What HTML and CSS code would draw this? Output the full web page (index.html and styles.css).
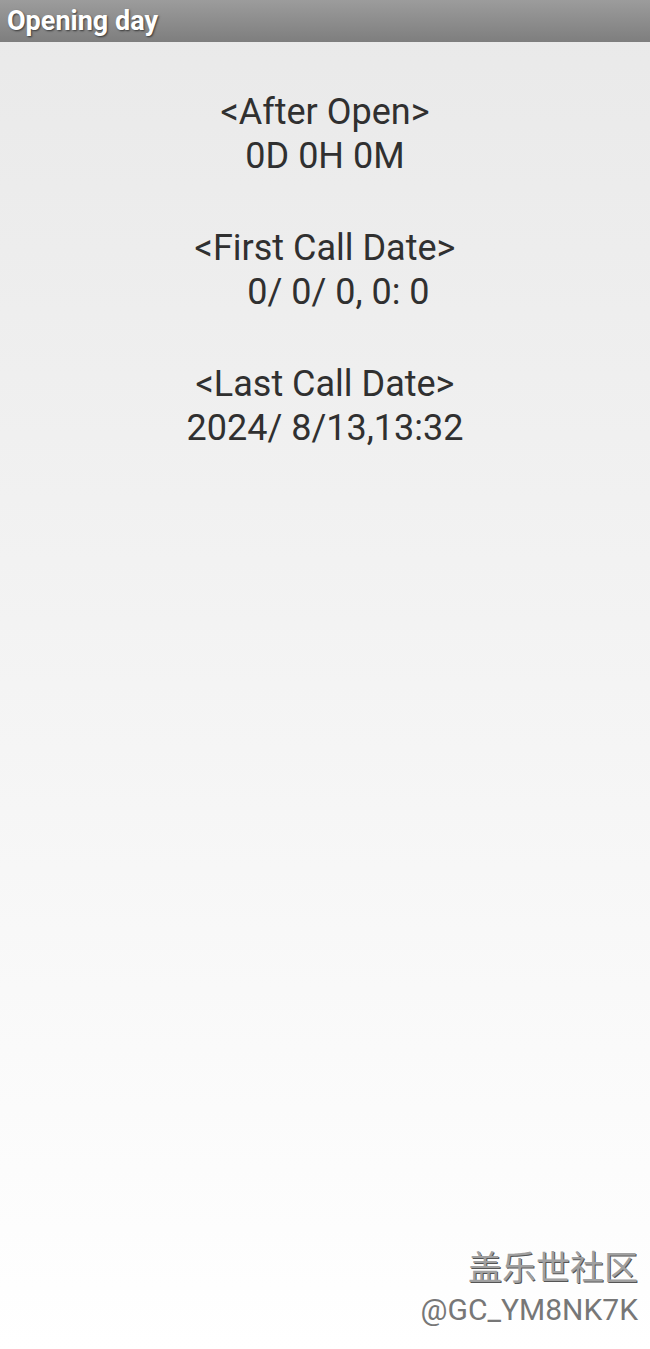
FILE: index.html
```html
<!DOCTYPE html>
<html lang="en">
<head>
  <meta charset="UTF-8" />
  <meta name="viewport" content="width=device-width, initial-scale=1.0"/>
  <title>Opening day</title>
  <link rel="stylesheet" href="styles.css">
</head>
<body>
  <header class="titlebar">Opening day</header>

  <main class="info">
    <section class="block">
      <div class="line">&lt;After Open&gt;</div>
      <div class="line">0D 0H 0M</div>
    </section>
    <section class="block">
      <div class="line">&lt;First Call Date&gt;</div>
      <div class="line">   0/ 0/ 0, 0: 0</div>
    </section>
    <section class="block">
      <div class="line">&lt;Last Call Date&gt;</div>
      <div class="line">2024/ 8/13,13:32</div>
    </section>
  </main>

  <footer class="watermark">
    <div class="wm-brand">盖乐世社区</div>
    <div class="wm-user">@GC_YM8NK7K</div>
  </footer>
</body>
</html>
```

FILE: styles.css
```css
html, body {
  margin: 0;
  height: 100%;
}
body {
  font-family: Roboto, "Noto Sans", sans-serif;
  background: linear-gradient(to bottom, #e9e9e9 0%, #f6f6f6 60%, #ffffff 100%);
  display: flex;
  flex-direction: column;
  min-height: 1349px;
}
.titlebar {
  height: 42px;
  line-height: 42px;
  padding-left: 7px;
  background: linear-gradient(to bottom, #9c9c9c, #7e7e7e);
  color: #fff;
  font-weight: bold;
  font-size: 27px;
  text-shadow: 1px 1px 2px rgba(0, 0, 0, 0.6);
}
.info {
  flex: 1;
  padding-top: 48px;
  display: flex;
  flex-direction: column;
  gap: 48px;
}
.block {
  text-align: center;
  color: #303030;
  font-size: 36px;
}
.line {
  line-height: 44px;
  white-space: pre;
}
.watermark {
  text-align: right;
  padding: 0 12px 18px 0;
}
.wm-brand {
  font-family: "Noto Sans CJK SC", sans-serif;
  font-size: 34px;
  line-height: 46px;
  color: #a0a0a0;
  text-shadow: 1px 1px 0 #555, -1px -1px 0 #fff;
}
.wm-user {
  font-size: 30px;
  line-height: 42px;
  color: #777;
  text-shadow: 1px 1px 0 #fff;
}
```
